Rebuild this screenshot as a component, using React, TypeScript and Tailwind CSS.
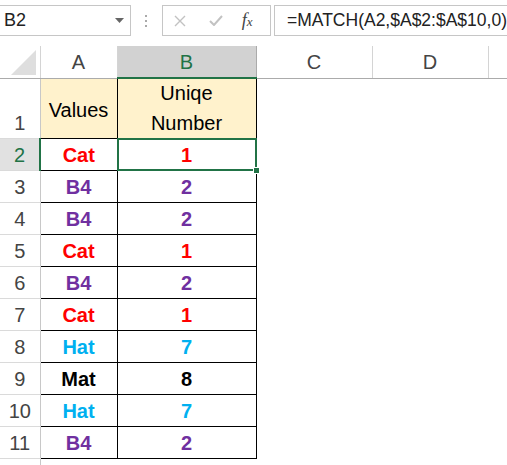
import React from "react";

type Fila = { n: number; v: string; u: string; color: string };

const FILAS: Fila[] = [
  { n: 2, v: "Cat", u: "1", color: "text-[#ff0000]" },
  { n: 3, v: "B4", u: "2", color: "text-[#7030a0]" },
  { n: 4, v: "B4", u: "2", color: "text-[#7030a0]" },
  { n: 5, v: "Cat", u: "1", color: "text-[#ff0000]" },
  { n: 6, v: "B4", u: "2", color: "text-[#7030a0]" },
  { n: 7, v: "Cat", u: "1", color: "text-[#ff0000]" },
  { n: 8, v: "Hat", u: "7", color: "text-[#00b0f0]" },
  { n: 9, v: "Mat", u: "8", color: "text-black" },
  { n: 10, v: "Hat", u: "7", color: "text-[#00b0f0]" },
  { n: 11, v: "B4", u: "2", color: "text-[#7030a0]" },
];

function BarraFormula() {
  return (
    <div className="flex h-[46px] items-start bg-white pt-[5px]">
      {/* cuadro de nombre */}
      <div className="flex h-[31px] w-[132px] items-center justify-between border-y border-r border-[#c6c6c6] pl-[4px] pr-[6px]">
        <span className="text-[18px] text-[#222]">B2</span>
        <svg width="9" height="5" viewBox="0 0 9 5">
          <path d="M0 0 H9 L4.5 5 Z" fill="#666" />
        </svg>
      </div>
      <div className="flex h-[31px] w-[31px] flex-col items-center justify-center gap-[3px]">
        <span className="h-[2px] w-[2px] bg-[#aaa]" />
        <span className="h-[2px] w-[2px] bg-[#aaa]" />
        <span className="h-[2px] w-[2px] bg-[#aaa]" />
      </div>
      {/* cancelar / aceptar / fx */}
      <div className="flex h-[31px] w-[110px] items-center border border-[#c6c6c6] pl-[11px]">
        <svg width="12" height="12" viewBox="0 0 12 12">
          <path d="M1 1 L11 11 M11 1 L1 11" stroke="#c2c2c2" strokeWidth="1.4" />
        </svg>
        <svg className="ml-[23px]" width="14" height="11" viewBox="0 0 14 11">
          <path d="M1 6 L5 10 L13 1" fill="none" stroke="#c2c2c2" strokeWidth="2" />
        </svg>
        <span className="ml-[19px] font-['Liberation_Serif',serif] text-[18px] italic text-[#444]">
          f<span className="text-[13px]">x</span>
        </span>
      </div>
      <div className="ml-[3px] flex h-[31px] flex-1 items-center border-y border-l border-[#c6c6c6] pl-[12px]">
        <span className="whitespace-nowrap text-[17.5px] text-[#222]">=MATCH(A2,$A$2:$A$10,0)</span>
      </div>
    </div>
  );
}

export default function App() {
  const encabezado = "h-[32px] border-r border-b border-[#d4d4d4] border-b-[#ababab] bg-white text-center align-middle text-[20px] font-normal text-[#444]";
  const filaNum = "border-r border-b border-[#dadada] border-r-[#c8c8c8] bg-white text-center align-bottom text-[20px] text-[#444]";
  const celda = "border border-black text-center align-middle text-[20px] font-bold";

  return (
    <div className="h-[465px] w-[507px] overflow-hidden bg-white font-['Liberation_Sans',Arial,sans-serif]">
      <BarraFormula />
      <table className="w-[528px] min-w-[528px] table-fixed border-collapse">
        <colgroup>
          <col className="w-[40px]" />
          <col className="w-[77px]" />
          <col className="w-[139px]" />
          <col className="w-[116px]" />
          <col className="w-[116px]" />
          <col className="w-[40px]" />
        </colgroup>
        <thead>
          <tr>
            <th className="relative h-[32px] border-r border-b border-[#d4d4d4] border-b-[#ababab] bg-white p-0">
              <svg className="absolute left-[11px] top-[4px]" width="26" height="26" viewBox="0 0 26 26">
                <path d="M0 25 L25 0 L25 25 Z" fill="#dedede" />
              </svg>
            </th>
            <th className={encabezado}>A</th>
            <th className="h-[32px] border-r border-[#ababab] border-b-2 border-b-[#217346] bg-[#d2d2d2] text-center text-[20px] font-normal text-[#217346]">
              B
            </th>
            <th className={encabezado}>C</th>
            <th className={encabezado}>D</th>
            <th className={encabezado} />
          </tr>
        </thead>
        <tbody>
          <tr className="h-[60px]">
            <td className={filaNum}>1</td>
            <td className="border border-black bg-[#fff2cc] text-center align-bottom text-[20px] leading-[28px] text-black">
              <div className="pb-[14px]">Values</div>
            </td>
            <td className="border border-black bg-[#fff2cc] text-center align-bottom text-[20px] leading-[28px] text-black">
              <div className="pb-[2px]">Uniqe</div>
              <div className="pb-[1px]">Number</div>
            </td>
            <td />
            <td />
            <td />
          </tr>
          {FILAS.map((f) => {
            const sel = f.n === 2;
            return (
              <tr key={f.n} className="h-[32px]">
                <td
                  className={
                    sel
                      ? "border-r-2 border-b border-[#dadada] border-r-[#217346] bg-[#e1e1e1] text-center align-middle text-[20px] text-[#217346]"
                      : filaNum + " align-middle"
                  }
                >
                  {f.n}
                </td>
                <td className={celda + " " + f.color}>{f.v}</td>
                <td className={celda + " relative " + f.color}>
                  {f.u}
                  {sel && (
                    <>
                      <span className="pointer-events-none absolute -inset-[1px] border-2 border-[#217346]" />
                      <span className="absolute -bottom-[4px] -right-[4px] h-[7px] w-[7px] border border-white bg-[#217346]" />
                    </>
                  )}
                </td>
                <td />
                <td />
                <td />
              </tr>
            );
          })}
          <tr className="h-[32px]">
            <td className={filaNum} />
            <td />
            <td />
            <td />
            <td />
            <td />
          </tr>
        </tbody>
      </table>
    </div>
  );
}
